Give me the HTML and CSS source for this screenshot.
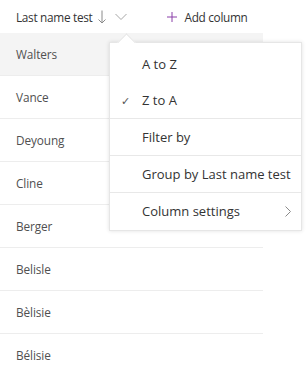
FILE: index.html
```html
<!DOCTYPE html>
<html lang="en">
<head>
    <meta charset="UTF-8">
    <title>Last name test</title>
    <link rel="stylesheet" href="styles.css">
</head>
<body>
    <div class="list">
        <div class="head">
            <span class="col-name">Last name test</span>
            <svg class="sort" width="8" height="14" viewBox="0 0 8 14"><path d="M4 0.5 V13 M0.5 9.5 L4 13 L7.5 9.5" fill="none" stroke="#8a8a8a" stroke-width="1"/></svg>
            <svg class="chev" width="12" height="8" viewBox="0 0 12 8"><path d="M0.5 1 L6 6.5 L11.5 1" fill="none" stroke="#a6a6a6" stroke-width="1"/></svg>
            <span class="add">
                <svg class="plus" width="10" height="10" viewBox="0 0 10 10"><path d="M5 0 V10 M0 5 H10" stroke="#8a3ea8" stroke-width="1"/></svg>
                Add column
            </span>
        </div>

        <div class="row selected">Walters</div>
        <div class="row">Vance</div>
        <div class="row">Deyoung</div>
        <div class="row">Cline</div>
        <div class="row">Berger</div>
        <div class="row">Belisle</div>
        <div class="row">Bèlisie</div>
        <div class="row">Bélisie</div>
    </div>

    <div class="menu">
        <div class="beak"></div>
        <div class="item">A to Z</div>
        <div class="item"><span class="check">&#10003;</span>Z to A</div>
        <div class="sep"></div>
        <div class="item">Filter by</div>
        <div class="sep"></div>
        <div class="item">Group by Last name test</div>
        <div class="sep"></div>
        <div class="item">Column settings
            <svg class="more" width="6" height="11" viewBox="0 0 6 11"><path d="M0.5 0.5 L5.5 5.5 L0.5 10.5" fill="none" stroke="#8a8a8a" stroke-width="1"/></svg>
        </div>
    </div>
</body>
</html>
```

FILE: styles.css
```css
* {
    margin: 0;
    padding: 0;
    box-sizing: border-box;
}

body {
    font-family: "Open Sans", "Noto Sans", sans-serif;
    font-size: 12px;
    color: #333;
    background: #fff;
    width: 306px;
    height: 370px;
    overflow: hidden;
    position: relative;
}

.list {
    width: 263px;
}

.head {
    height: 33px;
    display: flex;
    align-items: center;
    padding-left: 16px;
    color: #333;
    white-space: nowrap;
    font-size: 11.8px;
    letter-spacing: -0.3px;
}

.head > * {
    flex-shrink: 0;
}

.sort {
    margin-left: 6px;
}

.chev {
    margin-left: 9px;
    margin-top: 1px;
}

.add {
    margin-left: 40px;
    display: flex;
    align-items: center;
}

.plus {
    margin-right: 7px;
}

.row {
    height: 43px;
    display: flex;
    align-items: center;
    padding-left: 16px;
    border-bottom: 1px solid #ededed;
    color: #505050;
    font-size: 11.8px;
    letter-spacing: -0.1px;
}

.row.selected {
    background: #f4f4f4;
}

.menu {
    position: absolute;
    left: 109px;
    top: 42px;
    width: 193px;
    background: #fff;
    border: 1px solid #e6e6e6;
    box-shadow: 0 0 4px rgba(0, 0, 0, 0.12);
    padding: 3px 0 1px;
    font-size: 13px;
}

.beak {
    position: absolute;
    left: 10px;
    top: -7px;
    width: 13px;
    height: 13px;
    background: #fff;
    border-left: 1px solid #e6e6e6;
    border-top: 1px solid #e6e6e6;
    transform: rotate(45deg);
}

.item {
    height: 36px;
    display: flex;
    align-items: center;
    padding-left: 32px;
    position: relative;
    color: #333;
}

.check {
    position: absolute;
    left: 11px;
    font-size: 11px;
    color: #555;
}

.more {
    margin-left: auto;
    margin-right: 10px;
}

.sep {
    height: 1px;
    background: #e8e8e8;
}
```
